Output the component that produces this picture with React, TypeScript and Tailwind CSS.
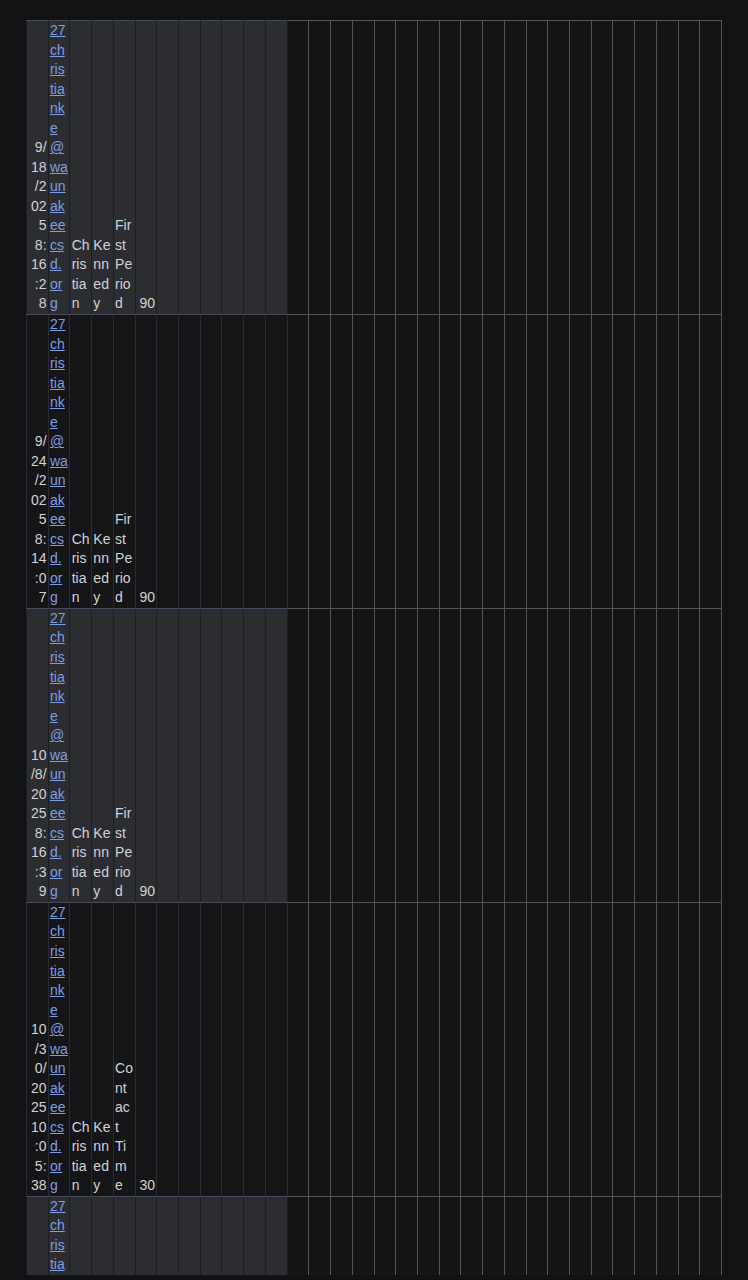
import React from "react";

type Row = { date: string; email: string; first: string; last: string; period: string; score: string };

const EMAIL = "27christianke@waunakeecsd.org";

const rows: Row[] = [
  { date: "9/18/2025 8:16:28", email: EMAIL, first: "Christian", last: "Kennedy", period: "First Period", score: "90" },
  { date: "9/24/2025 8:14:07", email: EMAIL, first: "Christian", last: "Kennedy", period: "First Period", score: "90" },
  { date: "10/8/2025 8:16:39", email: EMAIL, first: "Christian", last: "Kennedy", period: "First Period", score: "90" },
  { date: "10/30/2025 10:05:38", email: EMAIL, first: "Christian", last: "Kennedy", period: "Contact Time", score: "30" },
  { date: "11/5/2025 8:12:44", email: EMAIL, first: "Christian", last: "Kennedy", period: "First Period", score: "90" },
];

const leftEmpty = Array.from({ length: 6 });
const rightEmpty = Array.from({ length: 20 });

export default function App() {
  return (
    <div className="h-[1280px] w-[748px] overflow-hidden bg-[#111214]" style={{ fontFamily: '"Liberation Sans", Arial, sans-serif' }}>
      <div className="h-[1275px] overflow-hidden pl-[26px] pt-[20px]">
        <table className="w-[695px] table-fixed border-collapse text-[14px] leading-[19.53px] text-[#d2d2d4]">
          <colgroup>
            {Array.from({ length: 32 }).map((_, i) => (
              <col key={i} className="w-[21.72px]" />
            ))}
          </colgroup>
          <tbody>
            {rows.map((r, idx) => {
              const light = idx % 2 === 0;
              const lc = light
                ? "bg-[#2c2d30] border-x border-x-[#1e1f21] border-y border-y-[#46485c]"
                : "bg-[#151518] border-x border-x-[#2a2b2e] border-y border-y-[#46485c]";
              const cell = `${lc} align-bottom px-[1.2px] py-0 [overflow-wrap:anywhere]`;
              return (
                <tr key={idx}>
                  <td className={`${cell} text-right`}>{r.date}</td>
                  <td className={cell}>
                    <a href="#" className="text-[#7c9ee2] underline">{r.email}</a>
                  </td>
                  <td className={cell}>{r.first}</td>
                  <td className={cell}>{r.last}</td>
                  <td className={cell}>{r.period}</td>
                  <td className={`${cell} text-right`}>{r.score}</td>
                  {leftEmpty.map((_, i) => (
                    <td key={i} className={cell}></td>
                  ))}
                  {rightEmpty.map((_, i) => (
                    <td key={"r" + i} className="border border-[#545457] bg-[#141416] p-0"></td>
                  ))}
                </tr>
              );
            })}
          </tbody>
        </table>
      </div>
    </div>
  );
}
